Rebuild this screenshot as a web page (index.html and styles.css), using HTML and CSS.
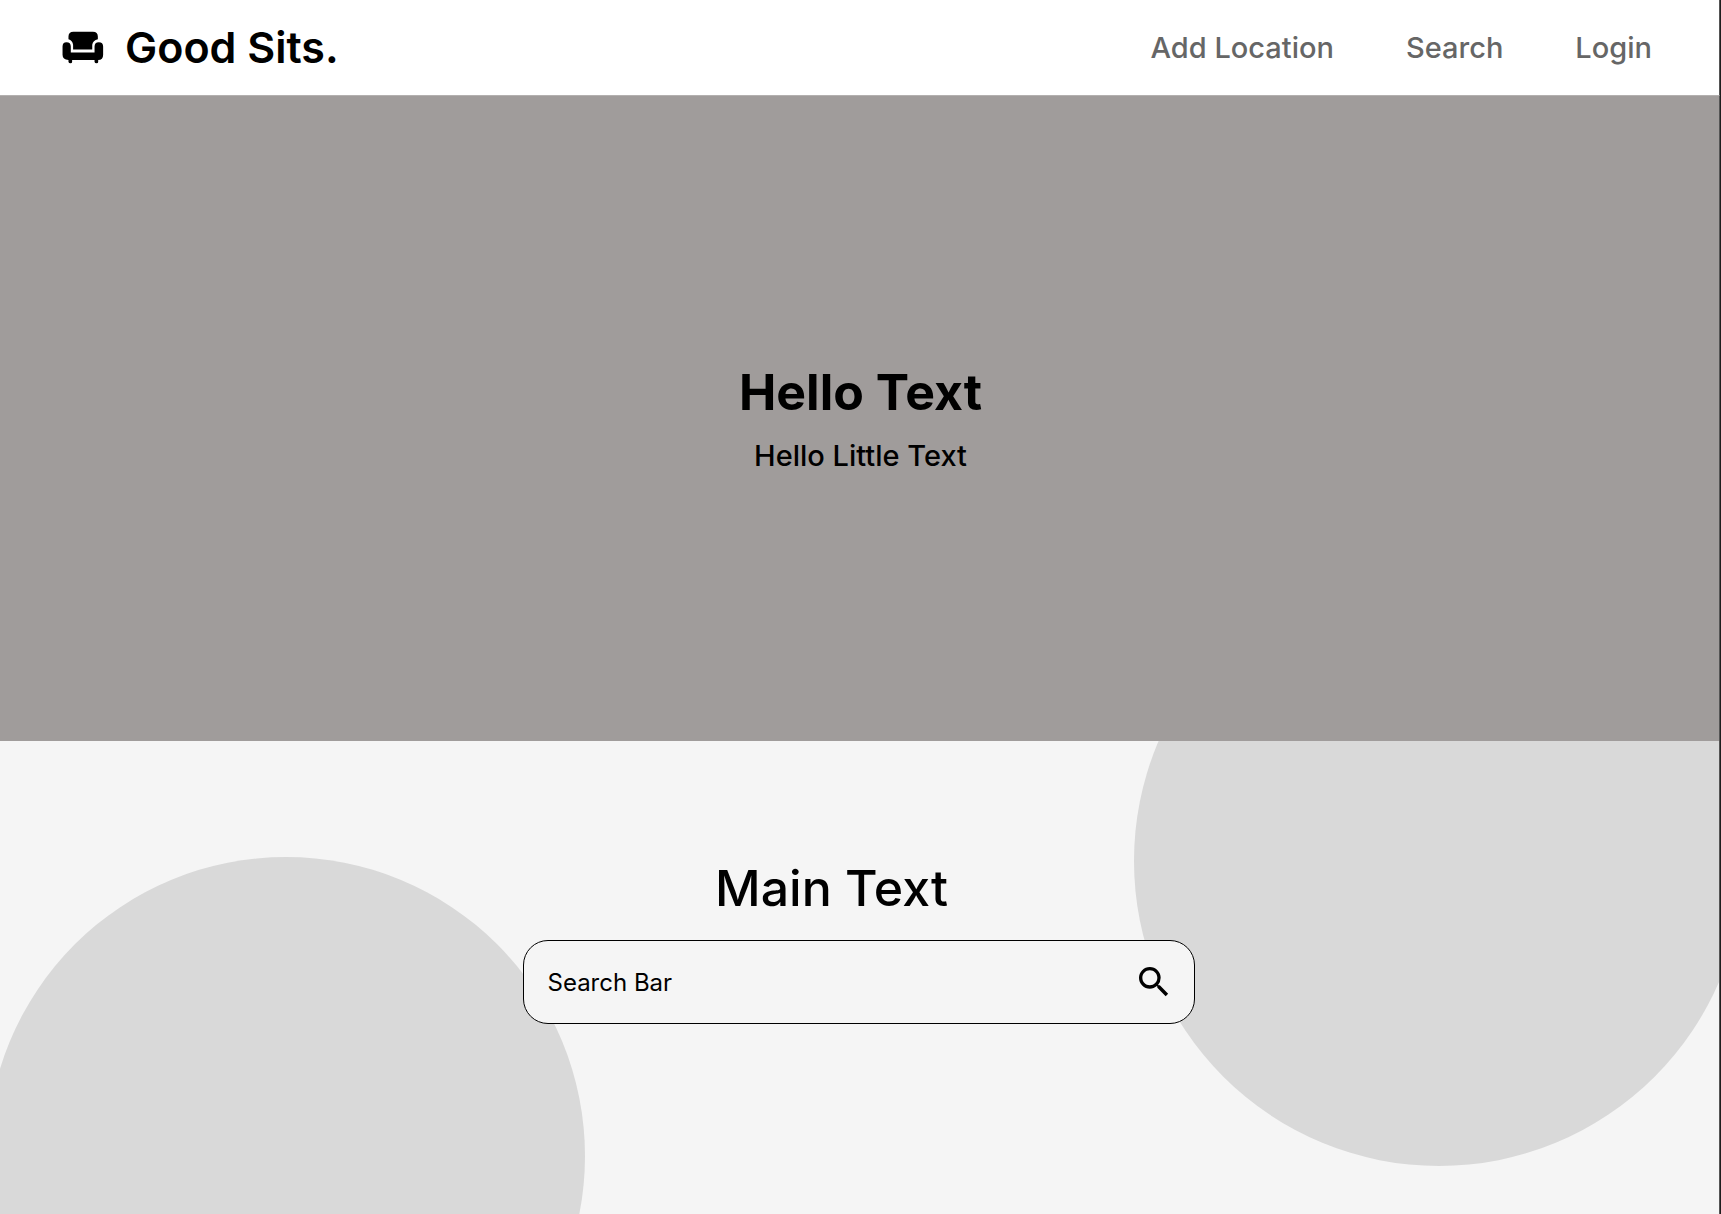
FILE: index.html
```html
<!DOCTYPE html>
<html lang="en">
<head>
<meta charset="utf-8">
<meta name="viewport" content="width=device-width, initial-scale=1">
<title>Good Sits.</title>
<link rel="stylesheet" href="styles.css">
</head>
<body>
<header class="header">
  <a class="brand" href="#">
    <svg class="brand-icon" viewBox="0 0 126 100" aria-hidden="true">
      <path d="M34 2H93Q108 2 108 17V25Q93 28 91 42V56H33V42Q31 28 19 25V17Q19 2 34 2Z"/>
      <path d="M1 47Q1 34 13 34Q26 34 26 47V65H98V47Q98 34 111 34Q124 34 124 47V72Q124 88 109 88V94Q109 98 104 98Q99 98 98 94V88H30V94Q30 98 25 98Q20 98 19 94V88Q1 87 1 72Z"/>
    </svg>
    <span>Good Sits.</span>
  </a>
  <nav class="nav">
    <a href="#add">Add Location</a>
    <a href="#search">Search</a>
    <a href="#login">Login</a>
  </nav>
</header>
<main class="main">
  <section class="hero">
    <h1 class="hero-title">Hello Text</h1>
    <p class="hero-text">Hello Little Text</p>
  </section>
  <section class="finder" id="search">
    <h2 class="finder-title">Main Text</h2>
    <form class="search" role="search">
      <input class="search-input" type="text" placeholder="Search Bar" aria-label="Search Bar">
      <button class="search-button" type="button" aria-label="Search">
        <svg class="search-icon" viewBox="3 3 18 18" aria-hidden="true"><path d="M15.5 14h-.79l-.28-.27A6.47 6.47 0 0 0 16 9.500 6.500 6.500 0 1 0 9.500 16c1.610 0 3.090-.59 4.230-1.570l.27.28v.79l5 4.990L20.490 19l-4.990-5zm-6 0C7.010 14 5 11.990 5 9.500S7.010 5 9.500 5 14 7.010 14 9.500 11.990 14 9.500 14z"/></svg>
      </button>
    </form>
  </section>
</main>
</body>
</html>
```
FILE: styles.css
```css
* {
  box-sizing: border-box;
}

body {
  display: flex;
  flex-direction: column;
  min-height: 100vh;
  margin: 0;
  border-right: 1px solid #1e1e1e;
  background: #f5f5f5;
  color: #000;
  font-family: Inter, "Liberation Sans", sans-serif;
}

a {
  color: inherit;
  text-decoration: none;
}

.header,
.main {
  border-right: 1px solid #555;
}

.header {
  display: flex;
  align-items: center;
  justify-content: space-between;
  padding: 20px 67px 20px 62px;
  border-bottom: 1px solid #b3b0af;
  background: #fff;
}

.brand {
  display: flex;
  align-items: center;
  gap: 21px;
  font-size: 43px;
  font-weight: 600;
  line-height: 55px;
}

.brand-icon {
  width: 42px;
  height: 33px;
}

.nav {
  display: flex;
  gap: 72px;
  color: #666;
  font-size: 29px;
  font-weight: 500;
  line-height: 34px;
}

.main {
  display: flex;
  flex: 1;
  flex-direction: column;
}

.hero {
  display: flex;
  flex-direction: column;
  align-items: center;
  gap: 17px;
  padding: 266px 24px 268px 26px;
  background: #a09c9b;
}

.hero-title,
.hero-text,
.finder-title {
  margin: 0;
}

.hero-title {
  font-size: 50px;
  font-weight: 700;
  line-height: 60px;
}

.hero-text {
  font-size: 29px;
  font-weight: 500;
  line-height: 34px;
}

.finder {
  position: relative;
  display: flex;
  flex: 1;
  flex-direction: column;
  align-items: center;
  gap: 22px;
  padding: 117px 26px 117px 24px;
  overflow: hidden;
}

/* Decorative circles behind the search area */
.finder::before,
.finder::after {
  position: absolute;
  border-radius: 50%;
  background: #d9d9d9;
  content: "";
}

.finder::before {
  top: 116px;
  left: -13px;
  width: 598px;
  height: 598px;
}

.finder::after {
  top: -185px;
  right: -25px;
  width: 610px;
  height: 610px;
}

.finder-title,
.search {
  z-index: 1;
  width: 100%;
  max-width: 672px;
}

.finder-title {
  padding-right: 54px;
  font-size: 50px;
  font-weight: 500;
  line-height: 60px;
  text-align: center;
}

.search {
  display: flex;
  align-items: center;
  padding: 0 25px 0 24px;
  border: 1px solid #000;
  border-radius: 25px;
  background: #f5f5f5;
}

.search-input {
  flex: 1;
  min-width: 0;
  height: 82px;
  padding: 0;
  border: 0;
  outline: 0;
  background: none;
  color: #000;
  font: 400 24px/30px Inter, "Liberation Sans", sans-serif;
}

.search-input::placeholder {
  color: #000;
  opacity: 1;
}

.search-button {
  display: flex;
  padding: 0;
  border: 0;
  background: none;
  cursor: pointer;
}

.search-icon {
  width: 30px;
  height: 30px;
}
```
